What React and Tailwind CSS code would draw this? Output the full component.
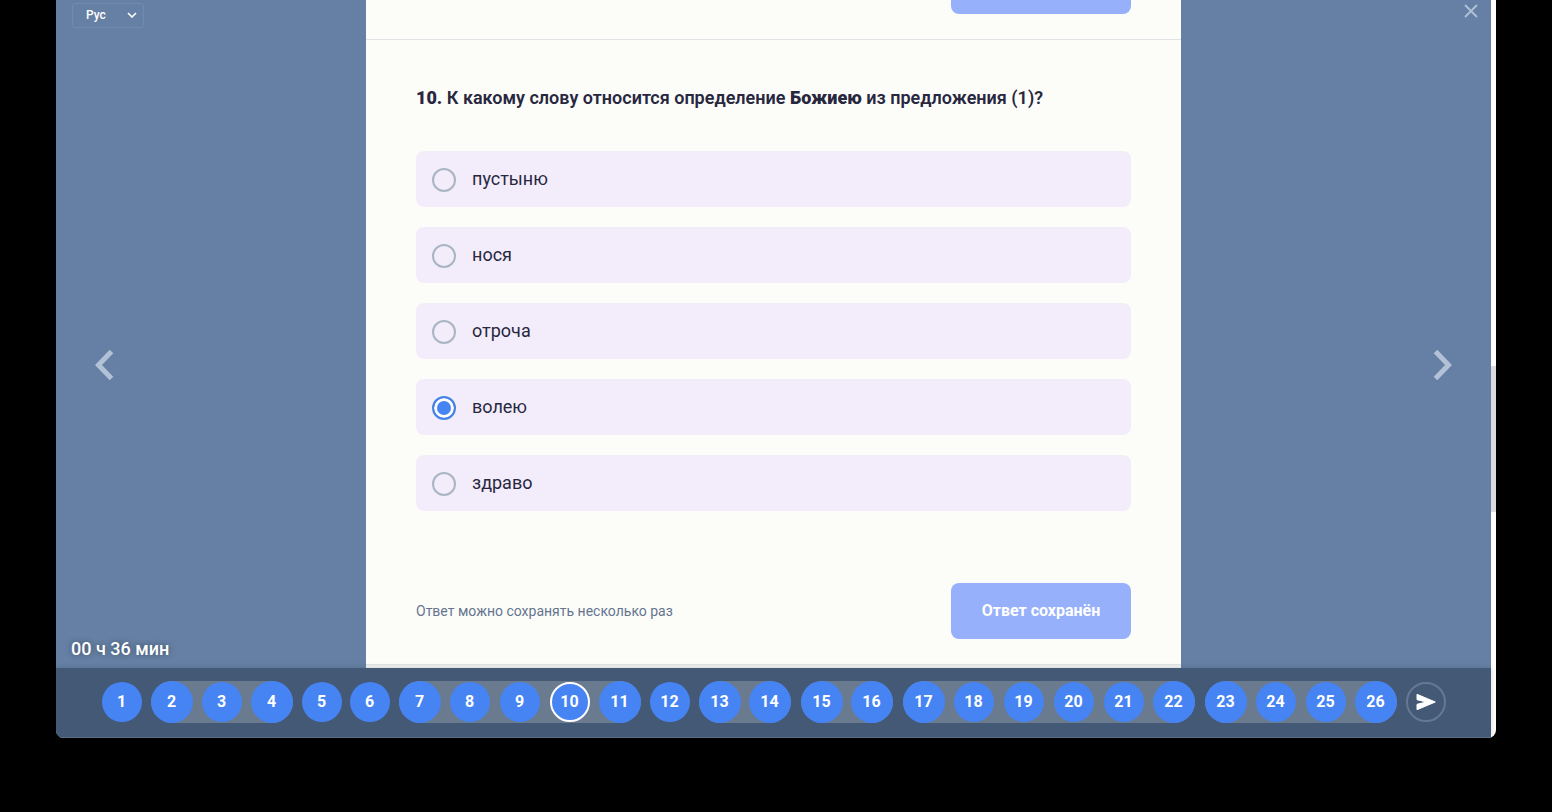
import clsx from 'clsx';
import { useState } from 'react';

const OPTIONS = ['пустыню', 'нося', 'отроча', 'волею', 'здраво'];

// Questions that share one text are grouped together in the pager
const GROUPS = [
    [1],
    [2, 3, 4],
    [5],
    [6],
    [7, 8, 9, 10, 11],
    [12],
    [13, 14],
    [15, 16],
    [17, 18, 19, 20, 21, 22],
    [23, 24, 25, 26],
];

const LanguageSelect = () => (
    <div className="relative mt-0.5 ml-4 h-[25px] w-18">
        <select
            aria-label="Язык"
            className="h-full w-full appearance-none rounded-[3px] border border-[#718bae] bg-transparent pl-[13px] text-xs font-medium text-white"
        >
            <option>Рус</option>
        </select>
        <svg
            viewBox="0 0 10 6"
            className="pointer-events-none absolute top-[10px] right-[7px] h-[6px] w-[10px]"
            fill="none"
            stroke="white"
            strokeWidth="1.6"
        >
            <path d="M1 1l4 4 4-4" />
        </svg>
    </div>
);

const ArrowButton = ({ label, direction }) => (
    <button type="button" aria-label={label} className="p-2">
        <svg viewBox="0 0 20 32" className="h-8 w-5" fill="none" stroke="#b3c1d7" strokeWidth="5">
            <path d={direction === 'left' ? 'M16.5 2.5L3.5 16l13 13.5' : 'M3.5 2.5L16.5 16l-13 13.5'} />
        </svg>
    </button>
);

const AnswerOption = ({ text, checked, onSelect }) => (
    <label className="flex h-14 items-center gap-4 rounded-lg bg-[#f3edfb] px-4 text-lg text-[#28273f]">
        <input
            type="radio"
            name="answer"
            checked={checked}
            onChange={onSelect}
            className="mt-0.5 h-6 w-6 appearance-none rounded-full border-2 border-[#a9b5c3] checked:border-[#4583e6] checked:bg-[#4684f4] checked:shadow-[inset_0_0_0_3px_white]"
        />
        {text}
    </label>
);

const PageButton = ({ number, active, ringed, onClick }) => (
    <button
        type="button"
        onClick={onClick}
        className={clsx(
            'h-10 w-10 shrink-0 rounded-full bg-[#4684f4] text-base font-bold text-white',
            active && 'border-2 border-white',
            ringed && 'ring-1 ring-[#4684f4]'
        )}
    >
        {number}
    </button>
);

const Pager = ({ current, onChange }) => (
    <nav className="flex items-center justify-center border-b border-[#5d6f86] bg-[#435975] pt-[13px] pb-[14px] shadow-[0_0_6px_rgba(0,0,0,0.15)]">
        {GROUPS.map((group) => {
            const isGroup = group.length > 1;
            return (
                <div
                    key={group[0]}
                    className={clsx('flex', isGroup ? 'mx-[5px] gap-[10px] rounded-full bg-[#6a7b90] p-px' : 'mx-1')}
                >
                    {group.map((number, index) => (
                        <PageButton
                            key={number}
                            number={number}
                            active={number === current}
                            ringed={isGroup && (index === 0 || index === group.length - 1)}
                            onClick={() => onChange(number)}
                        />
                    ))}
                </div>
            );
        })}
        <button
            type="button"
            aria-label="Завершить"
            className="mx-1 flex h-10 w-10 shrink-0 items-center justify-center rounded-full border-2 border-[#647996] text-white"
        >
            <svg
                viewBox="0 0 20 18"
                className="h-[18px] w-5"
                fill="currentColor"
                stroke="currentColor"
                strokeWidth="1"
                strokeLinejoin="round"
            >
                <path d="M1 1.3L19.3 9 1 16.7V11.3L10.5 9 1 6.7z" />
            </svg>
        </button>
    </nav>
);

const App = () => {
    const [answer, setAnswer] = useState('волею');
    const [current, setCurrent] = useState(10);

    return (
        <div className="min-h-screen bg-black px-14 font-['Roboto','Liberation_Sans',sans-serif]">
            <div className="flex overflow-hidden rounded-b-lg bg-white">
                <div className="flex min-w-0 flex-1 flex-col bg-[#6580a4]">
                    <div className="flex">
                        <aside className="flex flex-1 flex-col">
                            <div className="h-24">
                                <LanguageSelect />
                            </div>
                            <div className="flex flex-1 items-center pl-[31px]">
                                <ArrowButton label="Назад" direction="left" />
                            </div>
                            <p className="h-[34px] pl-[15px] text-lg leading-[30px] font-medium whitespace-nowrap text-white [text-shadow:0_0_6px_rgba(0,0,0,0.4)]">
                                00 ч 36 мин
                            </p>
                        </aside>

                        <main className="w-full max-w-[815px] bg-[#fcfdf9]">
                            {/* Tail of the previous question */}
                            <section className="flex justify-end border-b border-[#dfe3e6] px-[50px] pb-[25px]">
                                <button
                                    type="button"
                                    aria-label="Ответ сохранён"
                                    className="h-[14px] w-[180px] rounded-b-lg bg-[#97b0fb]"
                                />
                            </section>

                            <section className="border-b border-[#dfe3e6] px-[50px] pt-11 pb-[25px]">
                                <h2 className="text-lg leading-[27px] font-semibold text-[#28273f]">
                                    <b>10.</b> К какому слову относится определение <b>Божиею</b> из предложения (1)?
                                </h2>
                                <div className="mt-10 flex flex-col gap-5">
                                    {OPTIONS.map((text) => (
                                        <AnswerOption
                                            key={text}
                                            text={text}
                                            checked={text === answer}
                                            onSelect={() => setAnswer(text)}
                                        />
                                    ))}
                                </div>
                                <div className="mt-18 flex items-center justify-between">
                                    <p className="text-sm text-[#66758f]">Ответ можно сохранять несколько раз</p>
                                    <button
                                        type="button"
                                        className="h-14 w-[180px] rounded-lg bg-[#97b0fb] text-base font-bold text-white"
                                    >
                                        Ответ сохранён
                                    </button>
                                </div>
                            </section>
                            <div className="h-[3px] bg-[#f0f3f1]" />
                        </main>

                        <aside className="flex flex-1 flex-col items-end">
                            <div className="h-24 pr-3">
                                <button type="button" aria-label="Закрыть" className="mt-[3px] flex">
                                    <svg
                                        viewBox="0 0 16 16"
                                        className="h-4 w-4"
                                        fill="none"
                                        stroke="#b3c1d7"
                                        strokeWidth="1.8"
                                    >
                                        <path d="M2 2l12 12M14 2L2 14" />
                                    </svg>
                                </button>
                            </div>
                            <div className="flex flex-1 items-center pr-[31px]">
                                <ArrowButton label="Вперёд" direction="right" />
                            </div>
                            <div className="h-[34px]" />
                        </aside>
                    </div>
                    <Pager current={current} onChange={setCurrent} />
                </div>

                {/* Scroll track */}
                <div className="flex w-[5px] flex-col">
                    <div className="flex-[366]" />
                    <div className="flex-[146] bg-[#dddbdd]" />
                    <div className="flex-[226]" />
                </div>
            </div>
        </div>
    );
};

export default App;
